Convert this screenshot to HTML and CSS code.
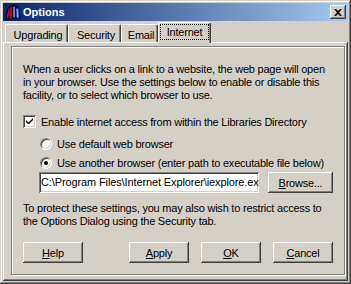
FILE: index.html
```html
<html>
	<head>
		<link rel="stylesheet" href="styles.css">
	</head>
	<body>
		<div class="window">
			<div class="titlebar">
				<svg class="appIcon" width="16" height="16" viewBox="0 0 16 16">
					<path d="M1 15 L3 4 L5 4 L4 15 Z" fill="#e0007a" stroke="#000" stroke-width="1"/>
					<path d="M4 15 L5 2 L8 2 L7 15 Z" fill="#d01010" stroke="#000" stroke-width="1"/>
					<path d="M8 15 L8 1 L11 1 L11 15 Z" fill="#1030c0" stroke="#000" stroke-width="1"/>
					<path d="M11 15 L11 3 L14 3 L15 15 Z" fill="#2050e0" stroke="#000" stroke-width="1"/>
					<path d="M9 3 L9 13 M12 5 L12.5 13" stroke="#c0d0ff" stroke-width="1"/>
				</svg>
				<div class="title">Options</div>
				<div class="closeButton">
					<svg width="8" height="7" viewBox="0 0 8 7">
						<path d="M0 0 H2 L4 2 L6 0 H8 L5 3.5 L8 7 H6 L4 5 L2 7 H0 L3 3.5 Z" fill="#000"/>
					</svg>
				</div>
			</div>
			<div class="tabs">
				<div class="tab tabUpgrading">Upgrading</div>
				<div class="tab tabSecurity">Security</div>
				<div class="tab tabEmail">Email</div>
				<div class="tab tabSelected"><span class="focusRect">Internet</span></div>
			</div>
			<div class="tabPanel">
				<div class="frame">
					<p class="intro">When a user clicks on a link to a website, the web page will open in your browser. Use the settings below to enable or disable this facility, or to select which browser to use.</p>
					<div class="option checkRow">
						<div class="checkbox">
							<svg width="7" height="7" viewBox="0 0 7 7">
								<path d="M0 2 V4 L2 6 L3 6 L7 2 V0 L2.5 4.5 Z" fill="#000"/>
							</svg>
						</div>
						<span>Enable internet access from within the Libraries Directory</span>
					</div>
					<div class="option radioRow firstRadio">
						<div class="radio"></div>
						<span>Use default web browser</span>
					</div>
					<div class="option radioRow">
						<div class="radio checked"></div>
						<span>Use another browser (enter path to executable file below)</span>
					</div>
					<div class="pathRow">
						<div class="pathBox">C:\Program Files\Internet Explorer\iexplore.exe</div>
						<div class="button browseButton"><u>B</u>rowse...</div>
					</div>
					<p class="note">To protect these settings, you may also wish to restrict access to the Options Dialog using the Security tab.</p>
					<div class="buttonRow">
						<div class="button"><u>H</u>elp</div>
						<div class="spacer"></div>
						<div class="button"><u>A</u>pply</div>
						<div class="button"><u>O</u>K</div>
						<div class="button"><u>C</u>ancel</div>
					</div>
				</div>
			</div>
		</div>
	</body>
</html>
```

FILE: styles.css
```css
html, body {
	margin: 0;
	padding: 0;
	background: #d4d0c8;
}

body {
	font-family: "Liberation Sans", Arial, sans-serif;
	font-size: 11px;
	letter-spacing: -0.22px;
	color: #000;
}

.window {
	width: 351px;
	height: 284px;
	box-sizing: border-box;
	padding: 3px;
	display: flex;
	flex-direction: column;
	background: #d4d0c8;
	box-shadow: inset -1px -1px #404040, inset 1px 1px #d4d0c8, inset -2px -2px #808080, inset 2px 2px #fff;
}

.titlebar {
	height: 18px;
	display: flex;
	align-items: center;
	background: linear-gradient(to right, #0a246a, #a6caf0);
	color: #fff;
}

.appIcon {
	margin-left: 2px;
	margin-right: 2px;
}

.title {
	font-weight: bold;
	letter-spacing: 0;
	flex: 1;
}

.closeButton {
	width: 16px;
	height: 14px;
	margin-right: 2px;
	display: flex;
	align-items: center;
	justify-content: center;
	background: #d4d0c8;
	box-shadow: inset -1px -1px #404040, inset 1px 1px #fff, inset -2px -2px #808080;
}

.tabs {
	height: 21px;
	display: flex;
	align-items: flex-end;
	padding-left: 2px;
}

.tab {
	height: 18px;
	box-sizing: border-box;
	padding: 4px 0 0 3px;
	border-top: 1px solid #fff;
	border-left: 1px solid #fff;
	border-right: 1px solid #404040;
	box-shadow: inset -1px 0 #808080;
	border-radius: 2px 2px 0 0;
	white-space: nowrap;
	text-align: center;
}

.tabUpgrading {
	width: 63px;
}

.tabSecurity {
	width: 53px;
}

.tabEmail {
	width: 37px;
}

.tabSelected {
	width: 53px;
	height: 21px;
	padding: 1px 0 0 1px;
	margin-bottom: -1px;
	position: relative;
	background: #d4d0c8;
}

.focusRect {
	display: block;
	width: 47px;
	height: 13px;
	padding-top: 1px;
	border: 1px dotted #000;
	text-align: center;
}

.tabPanel {
	flex: 1;
	display: flex;
	flex-direction: column;
	box-shadow: inset -1px -1px #404040, inset 1px 1px #fff, inset -2px -2px #808080;
	padding: 4px 3px 6px 8px;
}

.frame {
	flex: 1;
	border: 1px solid #808080;
	box-shadow: 1px 1px #fff, inset 1px 1px #fff;
	padding: 16px 11px 0 11px;
}

p {
	margin: 0;
	line-height: 13px;
}

.option {
	display: flex;
	align-items: center;
	height: 13px;
	white-space: nowrap;
}

.checkRow {
	margin-top: 13px;
}

.checkbox {
	width: 13px;
	height: 13px;
	box-sizing: border-box;
	margin-right: 5px;
	display: flex;
	align-items: center;
	justify-content: center;
	background: #fff;
	box-shadow: inset 1px 1px #808080, inset -1px -1px #fff, inset 2px 2px #404040, inset -2px -2px #d4d0c8;
}

.radioRow {
	margin-top: 6px;
	padding-left: 17px;
}

.firstRadio {
	margin-top: 9px;
}

.radio {
	width: 12px;
	height: 12px;
	box-sizing: border-box;
	margin-right: 5px;
	border-radius: 50%;
	border: 1px solid;
	border-color: #808080 #fff #fff #808080;
	background: #fff;
	box-shadow: inset 1px 1px #404040, inset -1px -1px #d4d0c8;
	display: flex;
	align-items: center;
	justify-content: center;
}

.radio.checked::after {
	content: "";
	width: 4px;
	height: 4px;
	border-radius: 50%;
	background: #000;
}

.pathRow {
	display: flex;
	margin-top: 3px;
	padding-left: 16px;
}

.pathBox {
	width: 220px;
	height: 21px;
	box-sizing: border-box;
	padding: 4px 0 0 2px;
	margin-right: 9px;
	overflow: hidden;
	white-space: nowrap;
	letter-spacing: -0.12px;
	background: #fff;
	box-shadow: inset 1px 1px #808080, inset -1px -1px #fff, inset 2px 2px #404040, inset -2px -2px #d4d0c8;
}

.note {
	margin-top: 9px;
}

.button {
	width: 60px;
	height: 21px;
	box-sizing: border-box;
	display: flex;
	align-items: center;
	justify-content: center;
	box-shadow: inset -1px -1px #404040, inset 1px 1px #fff, inset -2px -2px #808080, inset 2px 2px #d4d0c8;
	user-select: none;
}

.browseButton {
	width: 65px;
}

.buttonRow {
	display: flex;
	gap: 12px;
	margin-top: 14px;
}

.spacer {
	flex: 1;
}
```
